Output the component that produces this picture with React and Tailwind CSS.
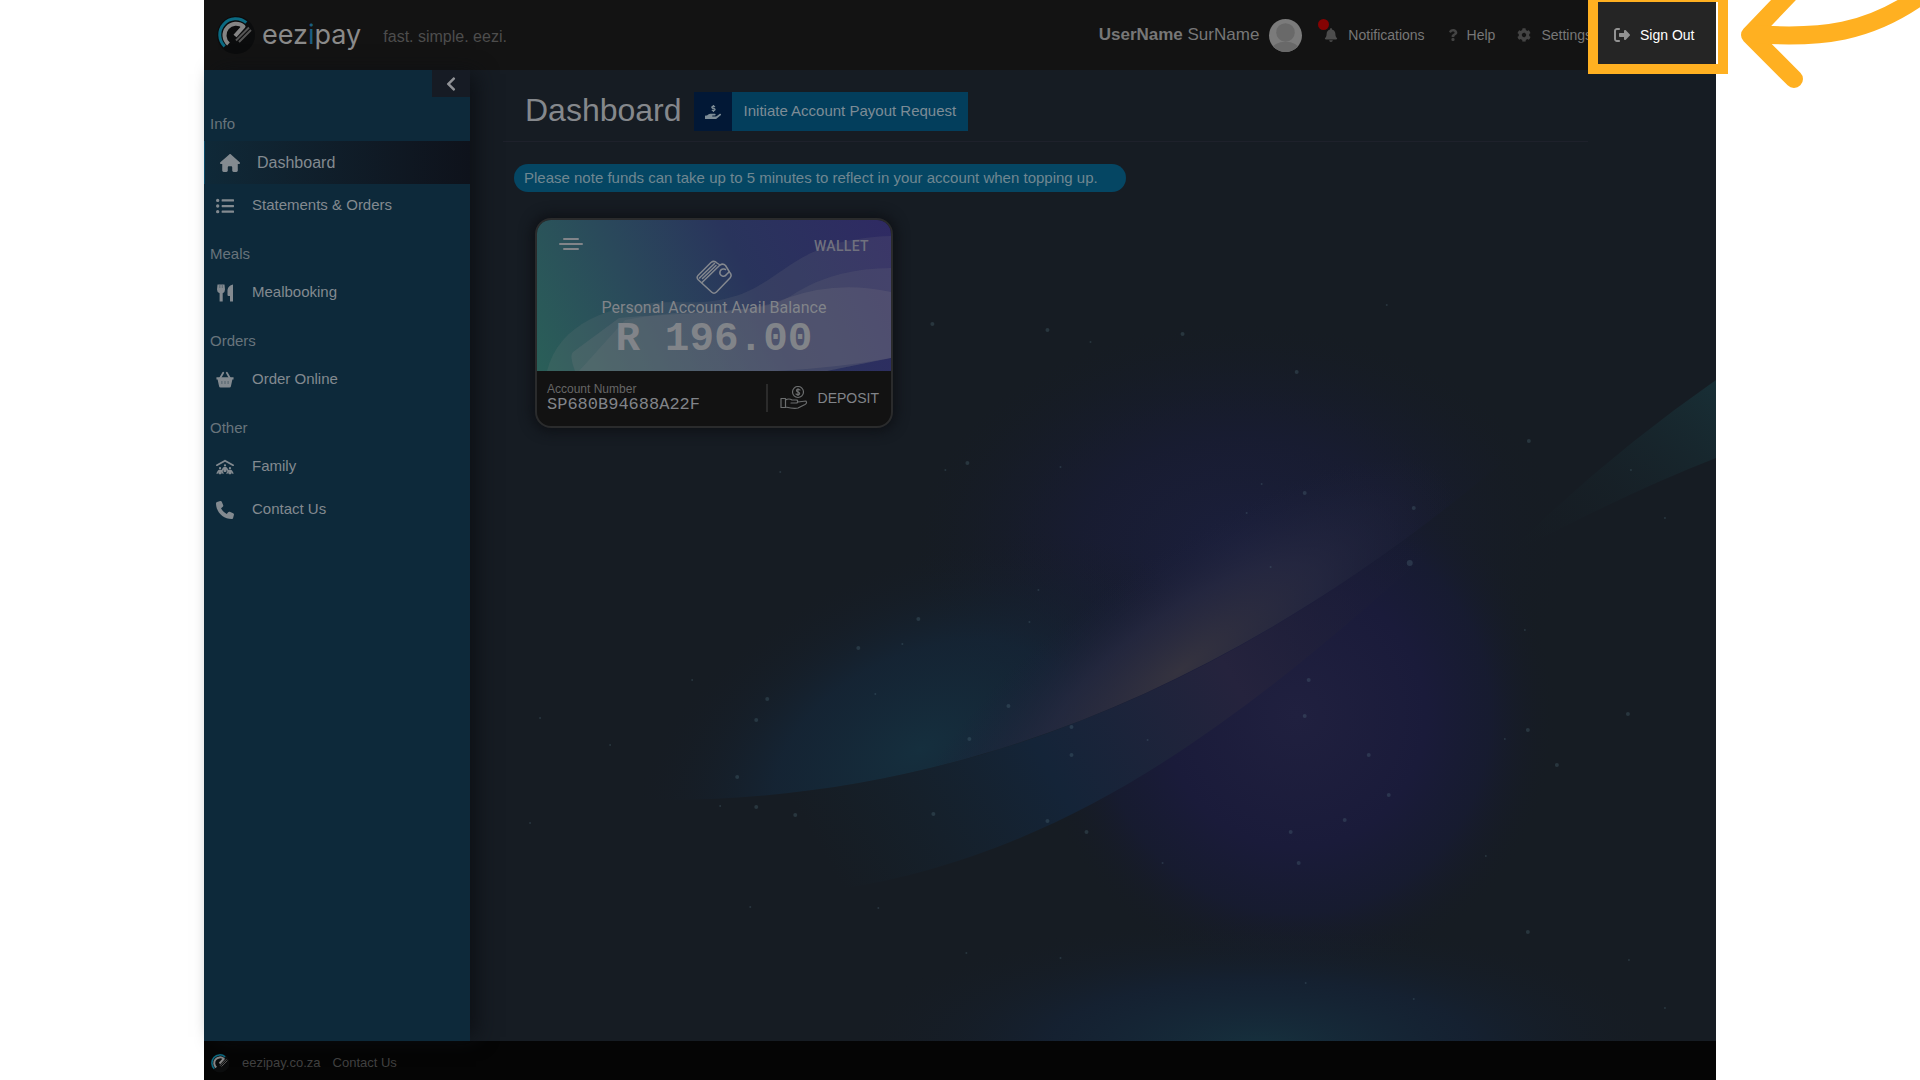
import React from 'react';
import { FaBell, FaChevronLeft, FaCog, FaHandHoldingUsd, FaListUl, FaQuestion } from 'react-icons/fa';
import { FaHouse, FaPeopleRoof, FaPhone, FaRightFromBracket } from 'react-icons/fa6';

function BasketIcon({ className }) {
  return (
    <svg className={className} viewBox="0 0 20 18" fill="currentColor" aria-hidden="true">
      <path d="M0.500 6 H19.500 V8.500 H18.200 L16.600 16 Q16.300 17.300 15 17.300 H5 Q3.700 17.300 3.400 16 L1.800 8.500 H0.500 Z" />
      <path d="M4.500 7 L8 1 M15.500 7 L12 1" fill="none" stroke="currentColor" strokeWidth="2" strokeLinecap="round" />
      <path d="M6.500 10 V13.500 M10 10 V13.500 M13.500 10 V13.500" stroke="#5f6d76" strokeWidth="1.500" />
    </svg>
  );
}

function CutleryIcon({ className }) {
  return (
    <svg className={className} viewBox="0 0 18 18" fill="currentColor" aria-hidden="true">
      <path d="M1.500 0.500 H8.500 L9 5.500 Q9 8.500 6.700 9.300 V17.500 H3.600 V9.300 Q1 8.500 1 5.500 Z" />
      <path d="M17 0.500 V17.500 H14 V12 H12.500 Q11.500 12 11.500 11 V6 Q12 1.500 17 0.500 Z" />
      <path d="M3.800 0 V4 M6.300 0 V4" stroke="#4e5f69" strokeWidth="0.800" />
    </svg>
  );
}

const sections = [
  {
    title: 'Info',
    items: [
      { label: 'Dashboard', icon: FaHouse, active: true },
      { label: 'Statements & Orders', icon: FaListUl },
    ],
  },
  { title: 'Meals', items: [{ label: 'Mealbooking', icon: CutleryIcon }] },
  { title: 'Orders', items: [{ label: 'Order Online', icon: BasketIcon }] },
  {
    title: 'Other',
    items: [
      { label: 'Family', icon: FaPeopleRoof },
      { label: 'Contact Us', icon: FaPhone },
    ],
  },
];

// x, y, radius
const stars = [
  [310, 402, 1], [462, 254, 2], [577, 260, 2], [620, 272, 1], [712, 264, 2], [826, 302, 2],
  [916, 235, 1], [497, 393, 2], [475, 400, 1], [590, 397, 1], [834, 423, 2], [791, 414, 1],
  [1058, 371, 2], [1160, 400, 1], [939, 493, 3], [943, 438, 2], [776, 443, 1], [800, 497, 1],
  [448, 549, 2], [432, 574, 1], [388, 578, 2], [297, 629, 2], [222, 610, 1], [286, 650, 2],
  [267, 707, 2], [250, 736, 1], [286, 737, 2], [325, 745, 2], [463, 744, 2], [577, 751, 2],
  [616, 762, 2], [499, 669, 2], [538, 636, 2], [601, 657, 2], [601, 685, 2], [677, 670, 1],
  [838, 610, 2], [834, 646, 2], [898, 685, 2], [918, 725, 2], [874, 750, 2], [820, 762, 2],
  [828, 793, 2], [692, 793, 1], [1054, 560, 1], [1157, 644, 2], [1057, 660, 2], [1086, 695, 2],
  [1034, 669, 1], [1057, 862, 2], [1015, 786, 1], [408, 838, 1], [280, 837, 1], [496, 883, 1],
  [590, 888, 1], [835, 913, 1], [943, 929, 1], [1194, 938, 1], [1158, 890, 1], [1194, 448, 1],
  [405, 624, 1], [60, 753, 1], [70, 648, 1], [140, 675, 1], [559, 552, 1], [568, 520, 1],
];

function Backdrop() {
  return (
    <svg className="absolute inset-0 h-full w-full" viewBox="0 0 1245 971" preserveAspectRatio="none" aria-hidden="true">
      <defs>
        <radialGradient id="indigo">
          <stop offset="0" stopColor="#20203f" />
          <stop offset="0.5" stopColor="#1a1b3a" />
          <stop offset="0.75" stopColor="#171b33" stopOpacity="0.8" />
          <stop offset="1" stopColor="#161b24" stopOpacity="0" />
        </radialGradient>
        <radialGradient id="haze">
          <stop offset="0" stopColor="#1b1f3c" />
          <stop offset="0.5" stopColor="#181c32" stopOpacity="0.7" />
          <stop offset="1" stopColor="#161b24" stopOpacity="0" />
        </radialGradient>
        <radialGradient id="floor">
          <stop offset="0" stopColor="#16303d" />
          <stop offset="0.5" stopColor="#14243a" stopOpacity="0.6" />
          <stop offset="1" stopColor="#161b22" stopOpacity="0" />
        </radialGradient>
        <radialGradient id="teal">
          <stop offset="0" stopColor="#152f3e" />
          <stop offset="0.5" stopColor="#14273a" stopOpacity="0.7" />
          <stop offset="1" stopColor="#161b24" stopOpacity="0" />
        </radialGradient>
        <radialGradient id="warm">
          <stop offset="0" stopColor="#35333f" />
          <stop offset="0.5" stopColor="#282a42" stopOpacity="0.7" />
          <stop offset="1" stopColor="#1b1f3a" stopOpacity="0" />
        </radialGradient>
        <linearGradient id="lower" gradientUnits="userSpaceOnUse" x1="350" y1="780" x2="940" y2="440">
          <stop offset="0" stopColor="#142530" stopOpacity="0" />
          <stop offset="0.35" stopColor="#142438" />
          <stop offset="0.65" stopColor="#25233d" />
          <stop offset="1" stopColor="#191c34" stopOpacity="0" />
        </linearGradient>
        <linearGradient id="corner" x1="1" y1="0" x2="0" y2="1">
          <stop offset="0" stopColor="#182f36" />
          <stop offset="1" stopColor="#161c22" stopOpacity="0" />
        </linearGradient>
        <clipPath id="above">
          <path d="M0 730 H170 C480 735 760 620 1030 394 V100 H0 Z" />
        </clipPath>
      </defs>
      <rect width="1245" height="971" fill="#161c23" />
      <ellipse cx="770" cy="480" rx="330" ry="230" fill="url(#haze)" />
      <ellipse cx="825" cy="645" rx="260" ry="265" fill="url(#indigo)" />
      <ellipse cx="790" cy="975" rx="420" ry="130" fill="url(#floor)" />
      <path d="M170 730 C480 735 760 620 1024 399 L950 490 C780 640 600 790 350 822 Z" fill="url(#lower)" />
      <g clipPath="url(#above)">
        <ellipse cx="770" cy="480" rx="330" ry="230" fill="url(#haze)" />
        <ellipse cx="450" cy="680" rx="310" ry="190" fill="url(#teal)" transform="rotate(-26 450 680)" />
        <ellipse cx="710" cy="600" rx="330" ry="110" fill="url(#warm)" transform="rotate(-36 710 600)" />
      </g>
      <path d="M1245 310 Q1130 390 1030 490 Q1150 425 1245 388 Z" fill="url(#corner)" />
      {stars.map(([x, y, r]) => (
        <circle key={`${x}-${y}`} cx={x} cy={y} r={r} fill="#5f8290" opacity="0.25" />
      ))}
    </svg>
  );
}

function LogoMark({ className }) {
  return (
    <svg className={className} viewBox="0 0 40 40" fill="none" aria-hidden="true">
      <circle cx="20" cy="20" r="19" fill="#0b0c0d" />
      <path d="M8.700 31.300 A16 16 0 0 1 30.300 7.700" stroke="#0b6a82" strokeWidth="3" />
      <path d="M12.500 29 A11 11 0 0 1 27.500 11.500 L19 21" stroke="#858585" strokeWidth="4" strokeLinejoin="round" />
      <path d="M20 25.500 L33 12.500 M23 27 L35 15" stroke="#555" strokeWidth="2" />
    </svg>
  );
}

function WalletIcon() {
  return (
    <svg className="h-9 w-9" viewBox="0 0 36 36" fill="none" stroke="#84888f" strokeWidth="1.500" strokeLinejoin="round" strokeLinecap="round" aria-hidden="true">
      <path d="M2 15.500 L15 2.500 Q18 0 21 3 L24 5 Q27 3 29.500 5.500 L33.500 12 Q36.500 15 34 18 L20.500 32 Q18 34.500 15.500 32 L2.500 20 Q0 17.500 2 15.500 Z" />
      <path d="M6 22.500 L24 5 M3.500 18 L18.500 3.500 M6.500 18.500 L20 5.500" />
      <path d="M33 12 L30.500 14.500 A3.600 3.600 0 1 1 28 9 L29.500 9.500" />
    </svg>
  );
}

function DepositIcon() {
  return (
    <svg className="h-6 w-7" viewBox="0 0 28 24" fill="none" stroke="#6b6d6e" strokeWidth="1.200" strokeLinejoin="round" strokeLinecap="round" aria-hidden="true">
      <circle cx="18" cy="6" r="5.500" />
      <path d="M20 4 Q18 2.500 16.500 4 Q16.500 6 18 6 Q20 6.500 19.500 8 Q18 9.500 16 8 M18 2.500 V9.500" />
      <path d="M1 12.500 H5.500 V21.500 H1 Z M5.500 14 Q9 12 12 14 H17 Q18.500 15.500 17 17 H11 M18 16 L26 15 Q27.500 17 25 18.500 L18 22 Q14 23 5.500 21" />
    </svg>
  );
}

function NavItem({ label, icon: Icon, active }) {
  return (
    <li>
      <a
        href="#"
        className={`flex h-[43px] items-center gap-4 text-[#838a90] ${
          active
            ? 'border-l border-[#0b4a68] bg-linear-to-r from-[#0f2938] to-[#0e121b] pl-3.5 text-base'
            : 'pl-2.5 text-[15px]'
        }`}
      >
        <span className="flex w-[22px] justify-center">
          <Icon className={active ? 'h-5 w-5' : 'h-[18px] w-[18px]'} />
        </span>
        {label}
      </a>
    </li>
  );
}

function Header() {
  return (
    <header className="relative z-10 flex h-[70px] items-center bg-[#131313] pl-3">
      <LogoMark className="h-10 w-10" />
      <span className="ml-1.5 font-[Inter] text-[27px] text-[#8a8a8a]">
        eez<span className="text-[#1b5d80]">i</span>pay
      </span>
      <span className="ml-[22px] pt-1 text-base text-[#4d4d4d]">fast. simple. eezi.</span>

      <nav className="ml-auto flex h-full items-center text-sm text-[#777]">
        <span className="text-[17px]">
          <b className="font-bold">UserName</b> SurName
        </span>
        <span className="ml-2.5 h-[33px] w-[33px] overflow-hidden rounded-full bg-[#7b7b7b]">
          <svg viewBox="0 0 32 32" fill="#696969" aria-hidden="true">
            <circle cx="16" cy="13" r="9" />
            <ellipse cx="16" cy="30" rx="13" ry="8" />
          </svg>
        </span>
        <a href="#" className="relative ml-[22px] flex items-center gap-2.5">
          <FaBell className="h-3.5 w-3.5 text-[#4d4d4d]" />
          <span className="absolute -top-1.5 -left-1.5 h-[11px] w-[11px] rounded-full bg-[#850303]" />
          Notifications
        </a>
        <a href="#" className="ml-[22px] flex items-center gap-2">
          <FaQuestion className="h-3 w-3 text-[#444]" />
          Help
        </a>
        <a href="#" className="ml-[22px] flex items-center gap-2.5">
          <FaCog className="h-3.5 w-3.5 text-[#444]" />
          Settings
        </a>
        <a href="#" className="relative ml-1.5 flex h-full w-[118px] items-center gap-2.5 bg-[#252525] pl-4 text-white">
          <FaRightFromBracket className="h-4 w-4 text-[#929292]" />
          Sign Out
          <span className="absolute -top-2 -right-3 -bottom-1 -left-2.5 border-10 border-[#ffb021]" />
        </a>
      </nav>
    </header>
  );
}

function Sidebar() {
  return (
    <aside className="relative z-10 w-[266px] shrink-0 bg-[#0d293a] shadow-[10px_0_20px_-4px_#0d1015]">
      <div className="flex justify-end">
        <button type="button" aria-label="Collapse menu" className="flex h-[27px] w-[38px] items-center justify-center bg-[#161b24] text-[#909296]">
          <FaChevronLeft className="h-4 w-4" />
        </button>
      </div>
      {sections.map((section) => (
        <section key={section.title}>
          <h2 className="flex h-11 items-center pt-2.5 pl-1.5 text-[15px] text-[#68747c]">{section.title}</h2>
          <ul>
            {section.items.map((item) => (
              <NavItem key={item.label} {...item} />
            ))}
          </ul>
        </section>
      ))}
    </aside>
  );
}

function WalletCard() {
  return (
    <article className="mt-[26px] ml-[21px] w-[358px] overflow-hidden rounded-2xl border-2 border-[#2a2b2c] bg-[#121212] text-[#818489] shadow-[0_0_12px_4px_#0f1217]">
      <div className="relative h-[151px] bg-linear-65 from-[#2a5f58] via-[#29345c] via-60% to-[#2f2a63]">
        <svg className="absolute inset-0 h-full w-full" viewBox="0 0 354 151" preserveAspectRatio="none" fill="#8a8688" aria-hidden="true">
          <path d="M10 151 C22 105 70 82 140 82 C250 88 230 20 354 16 V138 L290 151 Z" opacity="0.140" />
          <path d="M42 151 L88 100 C180 82 220 100 260 72 Q300 48 354 48 V138 L290 151 Z" opacity="0.140" />
          <path d="M38 151 Q32 135 36 132 L82 98 C150 92 210 95 250 78 Q300 60 354 72 V138 Q300 148 240 151 Z" opacity="0.180" />
        </svg>
        <div className="relative flex items-start justify-between px-[22px] pt-4">
          <span className="flex w-6 flex-col items-center gap-[3px] pt-0.5">
            <i className="h-0.5 w-4 rounded bg-current" />
            <i className="h-0.5 w-6 rounded bg-current" />
            <i className="h-0.5 w-4 rounded bg-current" />
          </span>
          <span className="font-[Roboto] text-sm leading-5 font-medium tracking-wide text-[#70717e]">WALLET</span>
        </div>
        <div className="relative flex flex-col items-center pt-1">
          <WalletIcon />
          <p className="mt-0.5 font-[Roboto] text-base leading-5">Personal Account Avail Balance</p>
          <p className="font-['Liberation_Mono',monospace] text-[41px] leading-[42px] font-bold">R 196.00</p>
        </div>
      </div>
      <div className="flex h-[55px] items-center pl-2.5">
        <div className="flex-1 pb-1">
          <p className="text-xs leading-4 text-[#666]">Account Number</p>
          <p className="font-['Liberation_Mono',monospace] text-[17px] leading-4">SP680B94688A22F</p>
        </div>
        <button type="button" className="mb-0.5 flex h-7 items-center gap-2.5 border-l-2 border-[#2b2b2b] px-3 text-sm">
          <DepositIcon />
          DEPOSIT
        </button>
      </div>
    </article>
  );
}

export default function App() {
  return (
    <div className="relative min-h-screen overflow-hidden bg-white px-51 font-['Liberation_Sans',Arial,sans-serif]">
      <div className="flex min-h-screen flex-col">
        <Header />
        <div className="flex flex-1">
          <Sidebar />
          <main className="relative flex-1">
            <Backdrop />
            <div className="relative mr-32 ml-[33px]">
              <div className="flex h-[72px] items-center gap-3 border-b border-[#1e212b] pt-2 pl-[22px]">
                <h1 className="text-[32px] text-[#85888c]">Dashboard</h1>
                <button type="button" className="mt-1 flex h-[39px] items-center bg-[#033e5c] text-[15px] text-[#7d8c96]">
                  <span className="flex h-full w-[38px] items-center justify-center bg-[#021836]">
                    <FaHandHoldingUsd className="h-4 w-4" />
                  </span>
                  <span className="px-3">Initiate Account Payout Request</span>
                </button>
              </div>
              <div className="mt-[22px] ml-[11px]">
                <p className="inline-block rounded-full bg-[#054663] pr-7 pl-2.5 text-[15px] leading-7 text-[#708791]">
                  Please note funds can take up to 5 minutes to reflect in your account when topping up.
                </p>
                <WalletCard />
              </div>
            </div>
          </main>
        </div>
        <footer className="flex h-[39px] items-center bg-[#050505] pt-1 pl-1.5 text-[13px] text-[#414141]">
          <LogoMark className="h-5 w-5" />
          <a href="#" className="ml-3">eezipay.co.za</a>
          <a href="#" className="ml-3">Contact Us</a>
        </footer>
      </div>
      <svg className="absolute top-0 right-0 h-[90px] w-[180px]" viewBox="0 0 180 90" fill="none" stroke="#ffb021" strokeWidth="18" strokeLinecap="round" strokeLinejoin="round" aria-hidden="true">
        <path d="M54 -11 L10 35 L54 79" />
        <path d="M12 34 C80 39 130 34 186 -8" />
      </svg>
    </div>
  );
}
